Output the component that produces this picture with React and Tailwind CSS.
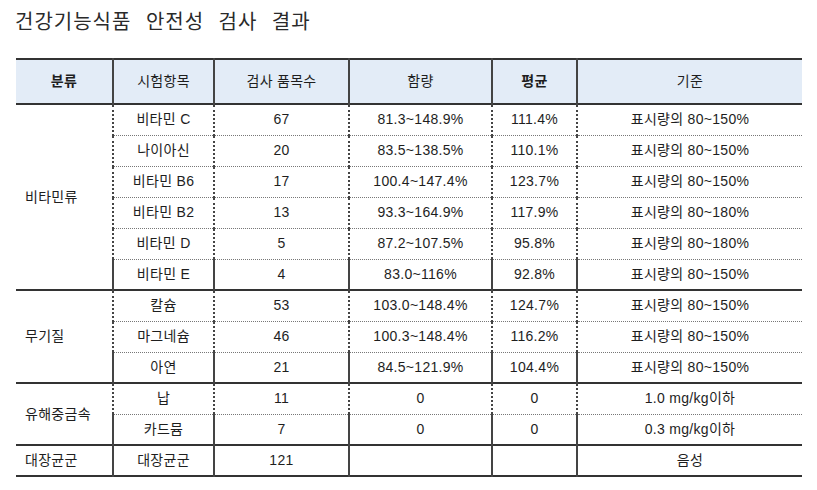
const groups = [
  {
    name: '비타민류',
    rows: [
      ['비타민 C', '67', '81.3~148.9%', '111.4%', '표시량의 80~150%'],
      ['나이아신', '20', '83.5~138.5%', '110.1%', '표시량의 80~150%'],
      ['비타민 B6', '17', '100.4~147.4%', '123.7%', '표시량의 80~150%'],
      ['비타민 B2', '13', '93.3~164.9%', '117.9%', '표시량의 80~180%'],
      ['비타민 D', '5', '87.2~107.5%', '95.8%', '표시량의 80~180%'],
      ['비타민 E', '4', '83.0~116%', '92.8%', '표시량의 80~150%'],
    ],
  },
  {
    name: '무기질',
    rows: [
      ['칼슘', '53', '103.0~148.4%', '124.7%', '표시량의 80~150%'],
      ['마그네슘', '46', '100.3~148.4%', '116.2%', '표시량의 80~150%'],
      ['아연', '21', '84.5~121.9%', '104.4%', '표시량의 80~150%'],
    ],
  },
  {
    name: '유해중금속',
    rows: [
      ['납', '11', '0', '0', '1.0 mg/kg이하'],
      ['카드뮴', '7', '0', '0', '0.3 mg/kg이하'],
    ],
  },
  {
    name: '대장균군',
    rows: [['대장균군', '121', '', '', '음성']],
  },
]

const headers = ['분류', '시험항목', '검사 품목수', '함량', '평균', '기준']

export default function App() {
  return (
    <div
      className="w-[817px] h-[490px] bg-white text-[#1e1e1e] overflow-hidden"
      style={{ fontFamily: "'Liberation Sans', 'Noto Sans CJK KR', sans-serif" }}
    >
      {/* 제목 */}
      <h1
        className="pl-[15px] pt-[9px] h-[58px] text-[20px] leading-[24px] font-normal tracking-[1px] [word-spacing:9px] text-[#2a2a2a]"
        style={{ fontFamily: "'Noto Sans CJK KR', sans-serif" }}
      >
        건강기능식품 안전성 검사 결과
      </h1>

      <table className="ml-[16px] w-[786px] border-collapse table-fixed text-[14px] tracking-[0.3px]">
        <colgroup>
          <col className="w-[97px]" />
          <col className="w-[101px]" />
          <col className="w-[135px]" />
          <col className="w-[143px]" />
          <col className="w-[85px]" />
          <col className="w-[225px]" />
        </colgroup>
        <thead>
          <tr className="h-[45px] bg-[#e3ecf7] border-t-2 border-b-2 border-[#333]">
            {headers.map((h, i) => (
              <th
                key={h}
                className={`text-center ${i === 0 || i === 4 ? 'font-bold' : 'font-normal'} ${i > 0 ? 'border-l-2 border-[#444]' : ''}`}
              >
                {h}
              </th>
            ))}
          </tr>
        </thead>
        <tbody>
          {groups.map(g =>
            g.rows.map((r, ri) => (
              <tr
                key={g.name + ri}
                className={`h-[31px] ${ri === g.rows.length - 1 ? 'border-b-2 border-[#333]' : ''}`}
              >
                {ri === 0 && (
                  <td rowSpan={g.rows.length} className="pl-[9px] align-middle">
                    {g.name}
                  </td>
                )}
                {r.map((c, ci) => (
                  <td
                    key={ci}
                    className={`text-center border-l-2 border-l-[#444] ${
                      ri < g.rows.length - 1 ? 'border-b border-b-[#777] border-dotted' : ''
                    }`}
                  >
                    {c}
                  </td>
                ))}
              </tr>
            ))
          )}
        </tbody>
      </table>
    </div>
  )
}
